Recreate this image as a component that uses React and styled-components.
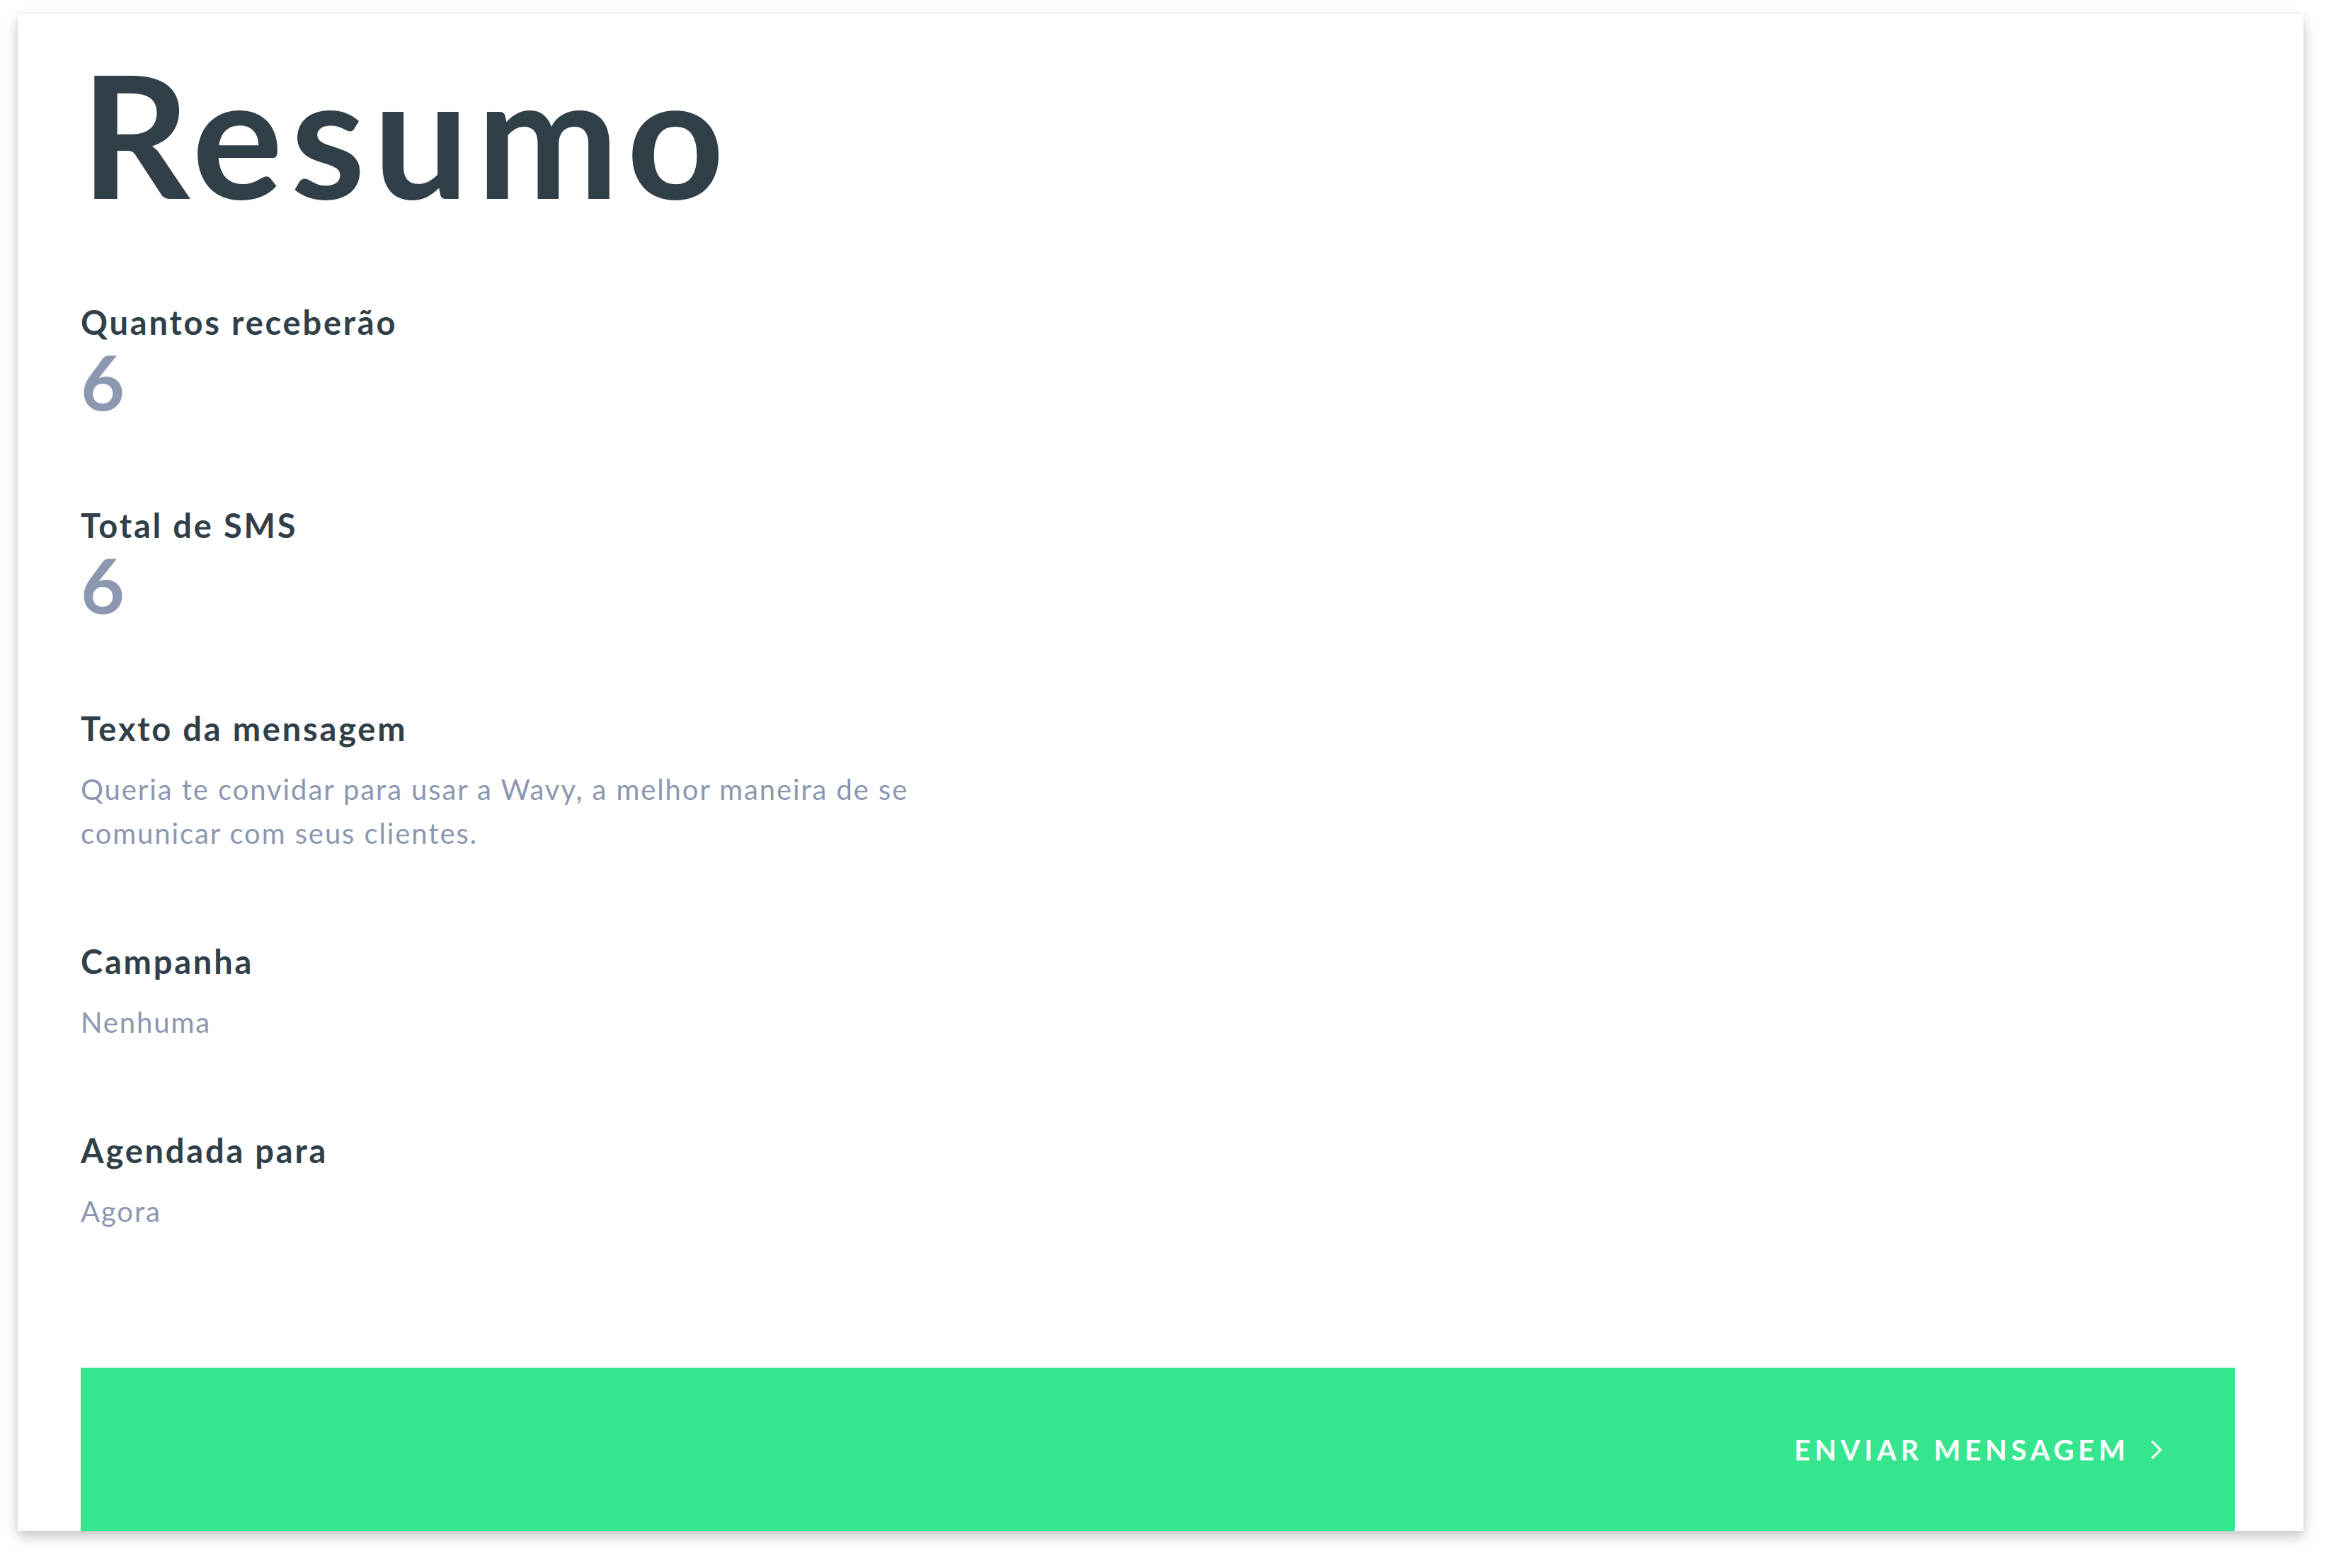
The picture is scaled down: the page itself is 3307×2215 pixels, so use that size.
import React from 'react';
import styled, { createGlobalStyle } from 'styled-components';

const GlobalStyle = createGlobalStyle`
  html, body {
    margin: 0;
    padding: 0;
    background: #ffffff;
  }
  body {
    font-family: Lato, 'Open Sans', sans-serif;
    -webkit-font-smoothing: antialiased;
  }
`;

const summary = [
  { label: 'Quantos receberão', value: '6', kind: 'number' },
  { label: 'Total de SMS', value: '6', kind: 'number' },
  {
    label: 'Texto da mensagem',
    value:
      'Queria te convidar para usar a Wavy, a melhor maneira de se comunicar com seus clientes.',
    kind: 'text',
  },
  { label: 'Campanha', value: 'Nenhuma', kind: 'text' },
  { label: 'Agendada para', value: 'Agora', kind: 'text' },
];

const App = () => {
  return (
    <Page>
      <GlobalStyle />
      <Card>
        <Title>Resumo</Title>

        <List>
          {summary.map((item) => (
            <Item key={item.label}>
              <Label>{item.label}</Label>
              {item.kind === 'number' ? (
                <NumberValue>{item.value}</NumberValue>
              ) : (
                <TextValue>{item.value}</TextValue>
              )}
            </Item>
          ))}
        </List>

        <SendButton type="button">
          ENVIAR MENSAGEM
          <svg width="16" height="26" viewBox="0 0 16 26" fill="none">
            <polyline
              points="2,2 13,13 2,24"
              stroke="#ffffff"
              strokeWidth="3.2"
              strokeLinecap="square"
              strokeLinejoin="miter"
            />
          </svg>
        </SendButton>
      </Card>
    </Page>
  );
};

export default App;

const Page = styled.div`
  padding: 20px 53px 50px 25px;
`;

const Card = styled.div`
  display: flex;
  flex-direction: column;
  background: #ffffff;
  padding: 51px 97px 0 89px;
  box-shadow: 0 8px 18px rgba(0, 0, 0, 0.22), 0 0 6px rgba(0, 0, 0, 0.06);
`;

const Title = styled.h1`
  margin: 0;
  font-family: Lato, sans-serif;
  font-weight: 700;
  font-size: 240px;
  line-height: 234px;
  letter-spacing: 11px;
  color: #303f48;
`;

const List = styled.div`
  display: flex;
  flex-direction: column;
  gap: 123px;
  margin-top: 123px;
`;

const Item = styled.div`
  display: flex;
  flex-direction: column;
`;

const Label = styled.div`
  font-family: Lato, sans-serif;
  font-weight: 700;
  font-size: 47px;
  line-height: 54px;
  letter-spacing: 2.8px;
  color: #303f48;
`;

const NumberValue = styled.div`
  margin-top: 3px;
  font-family: Lato, sans-serif;
  font-weight: 700;
  font-size: 107px;
  line-height: 107px;
  color: #8c97b0;
`;

const TextValue = styled.div`
  margin-top: 28px;
  max-width: 1260px;
  font-family: Lato, sans-serif;
  font-weight: 400;
  font-size: 40px;
  line-height: 62px;
  letter-spacing: 1.9px;
  color: #8c97b0;
`;

const SendButton = styled.button`
  display: flex;
  align-items: center;
  justify-content: flex-end;
  gap: 31px;
  margin-top: 190px;
  height: 231px;
  padding: 0 102px 0 0;
  border: 0;
  background: #35e68f;
  color: #ffffff;
  font-family: Lato, sans-serif;
  font-weight: 700;
  font-size: 40px;
  letter-spacing: 5.8px;
  cursor: pointer;
`;
